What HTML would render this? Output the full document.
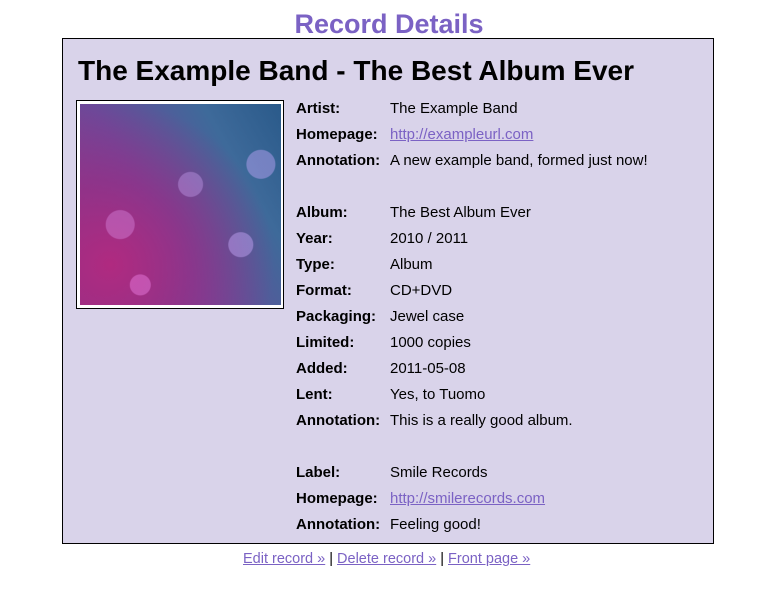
<!DOCTYPE html>
<html><head><meta charset="utf-8"><style>
body{margin:0;width:778px;height:597px;background:#fff;font-family:"Liberation Sans",sans-serif;position:relative;overflow:hidden}
.t{position:absolute;left:0;width:778px;text-align:center;top:6px;font-size:27px;font-weight:bold;color:#7b62c4;line-height:36px}
.box{position:absolute;left:62px;top:38px;width:650px;height:504px;border:1px solid #000;background:#d9d3ea}
h1{position:absolute;left:78px;top:53px;margin:0;font-size:28px;line-height:36px;font-weight:bold;color:#000}
.fr{position:absolute;left:76px;top:100px;width:206px;height:207px;border:1px solid #000;background:#fff}
.img{position:absolute;left:80px;top:104px;width:201px;height:201px;
background:
radial-gradient(circle at 30% 90%,rgba(230,120,220,.5) 0 10px,transparent 11px),
radial-gradient(circle at 80% 70%,rgba(190,160,240,.5) 0 12px,transparent 13px),
radial-gradient(circle at 90% 30%,rgba(180,160,240,.5) 0 14px,transparent 15px),
radial-gradient(circle at 55% 40%,rgba(200,160,240,.4) 0 12px,transparent 13px),
radial-gradient(circle at 20% 60%,rgba(220,140,230,.4) 0 14px,transparent 15px),
radial-gradient(circle at 15% 80%,#b02a80 0,rgba(160,40,130,.6) 35%,transparent 70%),
linear-gradient(60deg,#8a3a8a 0%,#6a4a9a 40%,#3e6a9a 75%,#2a5a8a 100%)}
.r{position:absolute;left:296px;font-size:15px;line-height:26px;color:#000;white-space:nowrap}
.r b{display:inline-block;width:94px}
a{color:#7b62c4}
.f{position:absolute;left:243px;top:550px;font-size:14.5px;line-height:18px}
</style></head><body>
<div class="t">Record Details</div>
<div class="box"></div>
<h1>The Example Band - The Best Album Ever</h1>
<div class="fr"></div><div class="img"></div>
<div class="r" style="top:96px"><b>Artist:</b>The Example Band</div>
<div class="r" style="top:122px"><b>Homepage:</b><a href="#">http://exampleurl.com</a></div>
<div class="r" style="top:148px"><b>Annotation:</b>A new example band, formed just now!</div>
<div class="r" style="top:200px"><b>Album:</b>The Best Album Ever</div>
<div class="r" style="top:226px"><b>Year:</b>2010 / 2011</div>
<div class="r" style="top:252px"><b>Type:</b>Album</div>
<div class="r" style="top:278px"><b>Format:</b>CD+DVD</div>
<div class="r" style="top:304px"><b>Packaging:</b>Jewel case</div>
<div class="r" style="top:330px"><b>Limited:</b>1000 copies</div>
<div class="r" style="top:356px"><b>Added:</b>2011-05-08</div>
<div class="r" style="top:382px"><b>Lent:</b>Yes, to Tuomo</div>
<div class="r" style="top:408px"><b>Annotation:</b>This is a really good album.</div>
<div class="r" style="top:460px"><b>Label:</b>Smile Records</div>
<div class="r" style="top:486px"><b>Homepage:</b><a href="#">http://smilerecords.com</a></div>
<div class="r" style="top:512px"><b>Annotation:</b>Feeling good!</div>
<div class="f"><a href="#">Edit record »</a> | <a href="#">Delete record »</a> | <a href="#">Front page »</a></div>
</body></html>
